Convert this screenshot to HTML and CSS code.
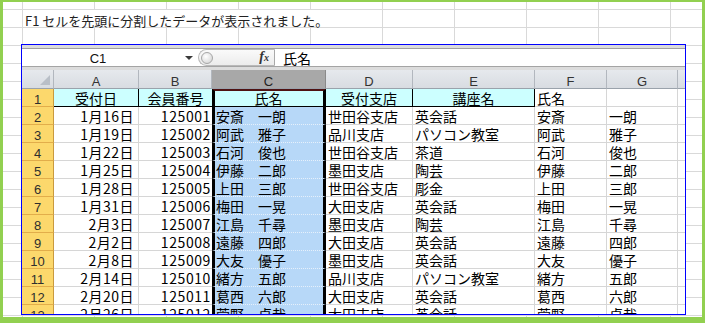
FILE: index.html
```html
<!DOCTYPE html>
<html lang="ja">
<head>
    <meta charset="UTF-8">
    <title>分割結果</title>
    <link rel="stylesheet" href="styles.css">
</head>
<body>
    <div class="frame">
        <div class="note">F1 セルを先頭に分割したデータが表示されました。</div>

        <div class="book">
            <div class="fbar">
                <div class="fbar-in">
                    <div class="namebox">
                        <span class="name">C1</span>
                        <span class="arrow"></span>
                    </div>
                    <div class="pill">
                        <span class="knob"></span>
                        <span class="fx"><i>f</i><i class="x">x</i></span>
                    </div>
                    <div class="ftext">氏名</div>
                </div>
            </div>

            <div class="sheet">
                <!-- column headers -->
                <div class="corner"><span class="tri"></span></div>
                <div class="ch">A</div>
                <div class="ch">B</div>
                <div class="ch ch-sel">C</div>
                <div class="ch">D</div>
                <div class="ch">E</div>
                <div class="ch">F</div>
                <div class="ch">G</div>
                <div class="ch ch-end"></div>

                <!-- row 1 -->
                <div class="rh">1</div>
                <div class="c hd">受付日</div>
                <div class="c hd colb">会員番号</div>
                <div class="c sel active">氏名</div>
                <div class="c hd">受付支店</div>
                <div class="c hd">講座名</div>
                <div class="c">氏名</div>
                <div class="c"></div>
                <div class="c end"></div>

                <div class="rh">2</div>
                <div class="c r">1月16日</div>
                <div class="c rb colb">125001</div>
                <div class="c sel">安斎　一朗</div>
                <div class="c">世田谷支店</div>
                <div class="c">英会話</div>
                <div class="c">安斎</div>
                <div class="c">一朗</div>
                <div class="c end"></div>

                <div class="rh">3</div>
                <div class="c r">1月19日</div>
                <div class="c rb colb">125002</div>
                <div class="c sel">阿武　雅子</div>
                <div class="c">品川支店</div>
                <div class="c">パソコン教室</div>
                <div class="c">阿武</div>
                <div class="c">雅子</div>
                <div class="c end"></div>

                <div class="rh">4</div>
                <div class="c r">1月22日</div>
                <div class="c rb colb">125003</div>
                <div class="c sel">石河　俊也</div>
                <div class="c">世田谷支店</div>
                <div class="c">茶道</div>
                <div class="c">石河</div>
                <div class="c">俊也</div>
                <div class="c end"></div>

                <div class="rh">5</div>
                <div class="c r">1月25日</div>
                <div class="c rb colb">125004</div>
                <div class="c sel">伊藤　二郎</div>
                <div class="c">墨田支店</div>
                <div class="c">陶芸</div>
                <div class="c">伊藤</div>
                <div class="c">二郎</div>
                <div class="c end"></div>

                <div class="rh">6</div>
                <div class="c r">1月28日</div>
                <div class="c rb colb">125005</div>
                <div class="c sel">上田　三郎</div>
                <div class="c">世田谷支店</div>
                <div class="c">彫金</div>
                <div class="c">上田</div>
                <div class="c">三郎</div>
                <div class="c end"></div>

                <div class="rh">7</div>
                <div class="c r">1月31日</div>
                <div class="c rb colb">125006</div>
                <div class="c sel">梅田　一晃</div>
                <div class="c">大田支店</div>
                <div class="c">英会話</div>
                <div class="c">梅田</div>
                <div class="c">一晃</div>
                <div class="c end"></div>

                <div class="rh">8</div>
                <div class="c r">2月3日</div>
                <div class="c rb colb">125007</div>
                <div class="c sel">江島　千尋</div>
                <div class="c">墨田支店</div>
                <div class="c">陶芸</div>
                <div class="c">江島</div>
                <div class="c">千尋</div>
                <div class="c end"></div>

                <div class="rh">9</div>
                <div class="c r">2月2日</div>
                <div class="c rb colb">125008</div>
                <div class="c sel">遠藤　四郎</div>
                <div class="c">大田支店</div>
                <div class="c">英会話</div>
                <div class="c">遠藤</div>
                <div class="c">四郎</div>
                <div class="c end"></div>

                <div class="rh">10</div>
                <div class="c r">2月8日</div>
                <div class="c rb colb">125009</div>
                <div class="c sel">大友　優子</div>
                <div class="c">墨田支店</div>
                <div class="c">英会話</div>
                <div class="c">大友</div>
                <div class="c">優子</div>
                <div class="c end"></div>

                <div class="rh">11</div>
                <div class="c r">2月14日</div>
                <div class="c rb colb">125010</div>
                <div class="c sel">緒方　五郎</div>
                <div class="c">品川支店</div>
                <div class="c">パソコン教室</div>
                <div class="c">緒方</div>
                <div class="c">五郎</div>
                <div class="c end"></div>

                <div class="rh">12</div>
                <div class="c r">2月20日</div>
                <div class="c rb colb">125011</div>
                <div class="c sel">葛西　六郎</div>
                <div class="c">大田支店</div>
                <div class="c">英会話</div>
                <div class="c">葛西</div>
                <div class="c">六郎</div>
                <div class="c end"></div>

                <div class="rh">13</div>
                <div class="c r">2月26日</div>
                <div class="c rb colb">125012</div>
                <div class="c sel">菅野　貞哉</div>
                <div class="c">大田支店</div>
                <div class="c">英会話</div>
                <div class="c">菅野</div>
                <div class="c">貞哉</div>
                <div class="c end"></div>
            </div>
        </div>
    </div>
</body>
</html>
```

FILE: styles.css
```css
* {
  margin: 0;
  padding: 0;
  box-sizing: border-box;
}
body {
    font-family: "Noto Sans CJK JP", sans-serif;
    background: #fff;
}
.frame {
    width: 705px;
    height: 323px;
    overflow: hidden;
    border-style: solid;
    border-color: #92d050;
    border-width: 2px 3px 6px 3px;
    background-color: #fff;
    background-image:
        linear-gradient(to right, #d9d9d9 1px, transparent 1px),
        linear-gradient(to bottom, #d9d9d9 1px, transparent 1px);
    background-size: 72px 100%, 100% 18px;
    background-position: 19px 0, 0 7px;
}
.note {
    margin: 8px 0 0 20px;
    width: 359px;
    height: 17px;
    padding-left: 2px;
    background: #fff;
    font-size: 13px;
    line-height: 21px;
    color: #222;
    white-space: nowrap;
}

/* workbook window */
.book {
    margin: 17px 0 0 18px;
    width: 665px;
    height: 271px;
    border: 1px solid #0000ff;
    overflow: hidden;
    background: #fff;
}
.fbar {
    height: 25px;
    padding: 3px 0;
    background: #dcdcdc;
}
.fbar-in {
    height: 19px;
    border-top: 1px solid #a0a0a0;
    border-bottom: 1px solid #a4a4a4;
    background: #fff;
    display: flex;
}
.namebox {
    width: 176px;
    display: flex;
}
.name {
    width: 152px;
    text-align: center;
    font-family: "Liberation Sans", sans-serif;
    font-size: 13px;
    line-height: 15px;
    padding-top: 2px;
    color: #111;
}
.arrow {
    margin: 7px 0 0 11px;
    width: 0;
    height: 0;
    border-top: 4px solid #3a3a3a;
    border-left: 4px solid transparent;
    border-right: 4px solid transparent;
}
.pill {
    width: 77px;
    display: flex;
    align-items: center;
    justify-content: space-between;
    border: 1px solid #b9b9b9;
    border-right-color: #a9a9a9;
    border-radius: 9px 0 0 9px;
    background: linear-gradient(#fafafa, #ececec);
}
.knob {
    width: 12px;
    height: 12px;
    margin-left: 2px;
    border-radius: 50%;
    border: 1px solid #a6a6a6;
    background: radial-gradient(circle at 40% 35%, #ffffff, #cfcfcf);
}
.fx {
    margin-right: 5px;
    font-family: "Liberation Serif", serif;
    font-weight: bold;
    color: #333;
    font-size: 14px;
    line-height: 14px;
}
.fx .x {
    font-size: 10px;
}
.ftext {
    padding: 2px 0 0 8px;
    font-size: 14px;
    line-height: 15px;
    color: #000;
}

/* grid */
.sheet {
    display: grid;
    grid-template-columns: 32px 85px 73px 114px 87px 122px 72px 71px 7px;
    grid-template-rows: 19px;
    grid-auto-rows: 18px;
}
.sheet > div {
    overflow: hidden;
    white-space: nowrap;
}
.corner,
.ch {
    background: linear-gradient(#e6e9ed, #d8dce1);
    border-right: 1px solid #b2b7be;
    border-bottom: 1px solid #9aa2ab;
}
.corner {
    display: flex;
    justify-content: flex-end;
    align-items: flex-end;
    padding: 0 3px 3px 0;
}
.tri {
    width: 0;
    height: 0;
    border-bottom: 10px solid #b9bfc7;
    border-left: 10px solid transparent;
}
.ch {
    text-align: center;
    font-family: "Liberation Sans", sans-serif;
    font-size: 13px;
    line-height: 15px;
    padding-top: 4px;
    color: #333;
}
.ch-sel {
    background: #a8a8a8;
    border-right-color: #8a8a8a;
    color: #222;
}
.ch-end {
    border-right: 0;
}
.rh {
    background: #fcd86c;
    border-right: 1px solid #c99a3e;
    border-bottom: 1px solid #e2ad4a;
    text-align: center;
    font-family: "Liberation Sans", sans-serif;
    font-size: 13px;
    line-height: 15px;
    padding-top: 3px;
    color: #2e2e2e;
}
.c {
    border-right: 1px solid #d6d6d6;
    border-bottom: 1px solid #d6d6d6;
    font-size: 14px;
    line-height: 15px;
    padding: 2px 2px 0;
    color: #000;
}
.c.r {
    text-align: right;
    padding-right: 4px;
    letter-spacing: 0.5px;
}
.c.rb {
    text-align: right;
    padding-right: 1px;
    letter-spacing: 0.6px;
}
.c.colb {
    border-right: 0;
}
.c.hd {
    background: #ccffff;
    text-align: center;
    letter-spacing: 0;
    border-right-color: #000;
    border-bottom-color: #000;
}
.c.sel {
    background: #b7d8f8;
    border-left: 3px solid #000;
    border-right: 3px solid #000;
    border-bottom: 1px dotted #e6f0fb;
    padding-left: 1px;
}
.c.active {
    background: #ccffff;
    text-align: center;
    border-top: 2px solid #4f1212;
    border-bottom: 1px solid #000;
    padding-top: 0;
}
.c.end {
    border-right: 0;
}
```
